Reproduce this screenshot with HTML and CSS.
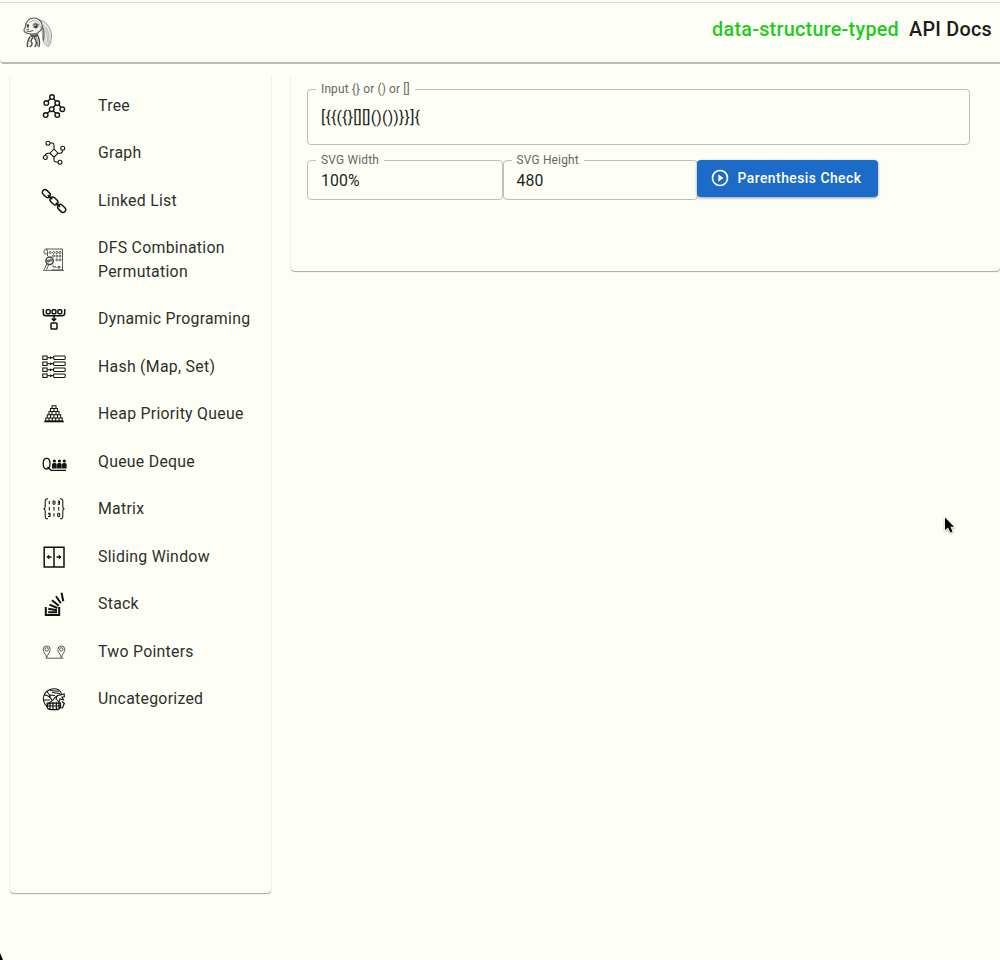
FILE: index.html
```html
<!DOCTYPE html>
<html lang="en">
<head>
<meta charset="utf-8">
<title>data-structure-typed</title>
<link rel="stylesheet" href="styles.css">
</head>
<body>
<header class="topbar">
  <svg class="logo" viewBox="0 0 30 34" fill="none" stroke="#555" stroke-linecap="round">
    <path d="M16 4C22 4 28 11 28.5 19Q28.5 27 25.5 30.5Q20 29 19.5 21Q20.5 14 16 7Z" fill="#e4e5de" stroke="#888" stroke-width=".8"/>
    <path d="M20 9Q26 18 24 27M23.5 12Q27.5 21 25.5 28" stroke="#b4b5ae" stroke-width=".9"/>
    <path d="M19 10Q22 16 20.5 24" stroke="#666" stroke-width="1.4"/>
    <path d="M2.5 10C3 5 6.5 1.8 11 2C16.5 2.2 20 7 19 12C17.5 16.5 12.5 18.5 8 18C3.5 17.5 0 16 1.2 13.5Q2.2 12 2.5 10Z" fill="#f4f5ee" stroke="#555" stroke-width="1.1"/>
    <path d="M6 6.5Q9 3.5 14 5Q17.5 7 17.5 12" stroke="#b4b5ae" stroke-width="1"/>
    <ellipse cx="12.8" cy="10" rx="2.2" ry="2.3" fill="#333" stroke="#888" stroke-width=".7"/>
    <path d="M10 8.3Q12.5 6 15.5 8.5" stroke="#555" stroke-width=".9"/>
    <ellipse cx="4.9" cy="9.8" rx="1.2" ry="1.9" fill="#444" stroke="none"/>
    <circle cx="12.2" cy="9.2" r=".7" fill="#fff" stroke="none"/>
    <path d="M3.8 15.2Q6.5 16.4 10 14.6M4 13.2L5.6 13.4" stroke-width="1"/>
    <path d="M7 18Q11 19.8 16 17L13.5 21Q10 22.5 7.5 20.5Z" fill="#555" stroke="none"/>
    <path d="M7 21Q4 25 4.5 30.5M9.5 22Q7 25 9 27Q9.5 29.5 7 30.5M14.5 19Q17.5 25 16 30.5M11.5 22Q15 27 12 30.5" stroke="#4a4a4a" stroke-width="1.4"/>
    <path d="M6 25Q8 24 8.5 26M13 21L15 25M14.5 26V30" stroke="#888"/>
  </svg>
  <nav class="links"><a class="brand">data-structure-typed</a><a class="docs">API Docs</a></nav>
</header>
<div class="layout">
  <aside class="sidebar">
    <ul class="menu">
      <li class="item"><svg class="icon" viewBox="0 0 24 24"><g stroke-width="1.35"><circle cx="10" cy="3" r="2.3"/><circle cx="4.3" cy="9" r="2.3"/><circle cx="15.3" cy="9" r="2.3"/><circle cx="9.7" cy="15.2" r="2.3"/><circle cx="20.3" cy="15.2" r="2.3"/><circle cx="3.7" cy="21" r="2.3"/><circle cx="15.3" cy="21" r="2.3"/><path d="M8.3 4.7L6 7.3M11.6 4.7L13.7 7.3M13.6 10.7L11.3 13.5M17 10.7L18.8 13.4M8 16.9L5.3 19.3M11.3 16.9L13.8 19.3"/></g></svg><span>Tree</span></li>
      <li class="item"><svg class="icon" viewBox="0 0 24 24"><path d="M12 8L16 12.2L12 16.2L8 12.2ZM8 2H10.5Q12 2.2 12 4V8M16 12.2H18.5Q20.5 12 20.6 9.2M8 12.2H6Q3.5 12.2 3.4 14.4M12 16.2V19Q12 21.2 16 21.2"/><circle cx="6" cy="2.3" r="2"/><circle cx="20.7" cy="7.2" r="2"/><circle cx="3.3" cy="16.5" r="2"/><circle cx="18" cy="21.2" r="2"/></svg><span>Graph</span></li>
      <li class="item"><svg class="icon" viewBox="0 0 24 24"><g stroke-width="1.4" transform="rotate(44 12 12)"><rect x="-3.2" y="9.3" width="9" height="5.4" rx="2.7"/><rect x="7.5" y="9.3" width="9" height="5.4" rx="2.7"/><rect x="18.2" y="9.3" width="9" height="5.4" rx="2.7"/><path d="M3.5 12H9.5M14.5 12H20.5" stroke-width="1.7"/></g></svg><span>Linked List</span></li>
      <li class="item"><svg class="icon" viewBox="0 0 24 24"><g stroke="#444" stroke-width=".9"><path d="M5 6H3Q2 6 2 3.5Q2 1 4 1H20.5V22H10M4 1Q5.5 1 5.5 3.5V8M1 22.3H22"/><circle cx="8.2" cy="4.5" r="1"/><circle cx="11.5" cy="4.5" r="1"/><circle cx="14.8" cy="4.5" r="1"/><circle cx="18" cy="4.5" r="1"/><circle cx="11.5" cy="8" r="1"/><circle cx="14.8" cy="8" r="1"/><circle cx="18" cy="8" r="1"/><circle cx="14.8" cy="11.8" r="1"/><circle cx="18" cy="11.8" r="1"/><circle cx="7.6" cy="12.8" r="3.7" stroke-width="1.5"/><circle cx="6.5" cy="13" r="1"/><circle cx="9" cy="12" r="1"/><path d="M5 15.7L2 21.5M7 16L4.5 21.5M10 18H12V20M16 18.5H18V20H16ZM13 18L14.5 20M4.4 13H9"/></g></svg><span>DFS Combination<br>Permutation</span></li>
      <li class="item"><svg class="icon" viewBox="0 0 24 24"><g stroke-width="1.5"><path d="M1.3 2V6Q1.3 8.8 4 8.8H20Q22.7 8.8 22.7 6V2M12 9V13M9.8 11.5L12 13.7L14.2 11.5"/><rect x="4.3" y="2.7" width="3.8" height="4" rx="1"/><rect x="10.1" y="2.7" width="3.8" height="4" rx="1"/><rect x="15.9" y="2.7" width="3.8" height="4" rx="1"/><rect x="9" y="16" width="6" height="6" rx=".8"/></g></svg><span>Dynamic Programing</span></li>
      <li class="item"><svg class="icon" viewBox="0 0 24 24"><g id="hash-row"><rect x=".8" y="1" width="4.3" height="3.4"/><rect x="11.6" y="1" width="11.6" height="3.4" rx=".8"/><path d="M5.2 2.7H11.5"/><path d="M8 1.2L10.2 2.7L8 4.2Z" fill="#111" stroke="none"/></g><use href="#hash-row" y="6"/><use href="#hash-row" y="12"/><use href="#hash-row" y="18"/></svg><span>Hash (Map, Set)</span></li>
      <li class="item"><svg class="icon" viewBox="0 0 24 24"><path d="M2.2 19.5H21.8" stroke-width="1.6"/><path d="M10 3.7H14V6.5H10ZM8.5 6.5H15.5V9.5H8.5ZM7 9.5H17V12.7H7ZM5.3 12.7H18.7V16H5.3ZM3.8 16H20.2V19H3.8ZM12 6.5V9.5M10 9.5V12.7M14 9.5V12.7M8.5 12.7V16M12 12.7V16M15.5 12.7V16M7 16V19M10.3 16V19M13.7 16V19M17 16V19"/></svg><span>Heap Priority Queue</span></li>
      <li class="item"><svg class="icon wide" viewBox="0 0 26 24"><path d="M4.7 8.4C7 8.4 8 10.3 8 13.6S7 19 4.7 19S1.2 17 1.2 13.6S2.4 8.4 4.7 8.4M5.5 17L9 20.3H24" stroke-width="1.3"/><g fill="#111" stroke="none"><circle cx="12.4" cy="11" r="1.6"/><circle cx="17.4" cy="11" r="1.6"/><circle cx="22.3" cy="11" r="1.6"/><path d="M10 18.5V14.4Q10 13 12.4 13T14.7 14.4V18.5ZM15.1 18.5V14.4Q15.1 13 17.4 13T19.7 14.4V18.5ZM20.1 18.5V14.4Q20.1 13 22.3 13T24.6 14.4V18.5Z"/></g></svg><span>Queue Deque</span></li>
      <li class="item"><svg class="icon" viewBox="0 0 24 24"><path d="M6 1.8Q3 1.5 3.2 4.5V9.5Q3.2 11.6 1.6 11.8Q3.2 12 3.2 14V19Q3 22.2 6 21.8M18 1.8Q21 1.5 20.8 4.5V9.5Q20.8 11.6 22.4 11.8Q20.8 12 20.8 14V19Q21 22.2 18 21.8M7.3 4V7.2M7.3 10V13.4M12 10V13.4M16.7 10V13.4M12 16.3V19.5M6 16.3H8V19.5H6M6.5 17.8H8M15.7 4H17.5V7.2H15.7M16 5.6H17.5"/><rect x="11" y="4" width="2" height="3.2" rx=".8"/><rect x="15.7" y="16.3" width="2" height="3.2" rx=".8"/></svg><span>Matrix</span></li>
      <li class="item"><svg class="icon" viewBox="0 0 24 24"><path d="M2.2 2.2H22V22H2.2ZM12 2.2V22" stroke-width="1.5"/><path d="M5.5 12H9.5M14.5 12H18.5" stroke-width="1.5"/><path d="M4.5 12L7.2 9.6V14.4ZM19.5 12L16.8 9.6V14.4Z" fill="#111" stroke="none"/></svg><span>Sliding Window</span></li>
      <li class="item"><svg class="icon" viewBox="0 0 24 24"><path d="M3.8 15V23H17.2V15M6.2 20.3H15M6.3 16.7L15 18.2M7.4 12.6L15.5 16M10 8.2L16.8 13.8M14 4.3L18.8 11.2M19.5 .7L21.3 9.2" stroke-width="2"/></svg><span>Stack</span></li>
      <li class="item"><svg class="icon" viewBox="0 0 24 24"><g stroke="#444" stroke-width=".9"><path d="M4.7 17.5C4 14.5 1.2 12.3 1.2 9.5A3.5 3.5 0 0 1 8.2 9.5C8.2 12.3 5.3 14.5 4.7 17.5ZM19.3 17.5C18.6 14.5 15.8 12.3 15.8 9.5A3.5 3.5 0 0 1 22.8 9.5C22.8 12.3 20 14.5 19.3 17.5ZM3.5 18.2H21.5"/><circle cx="4.7" cy="9.4" r="1.7"/><circle cx="19.3" cy="9.4" r="1.7"/></g></svg><span>Two Pointers</span></li>
      <li class="item"><svg class="icon" viewBox="0 0 24 24"><path d="M5 19.5Q1.4 16 1.3 11.2Q2 5 8 2.4Q13 .8 17 3Q20 6 19 8Q14 8 11 13L6 17ZM2 8Q7 8 10 13M5 4.5Q8 8 8.5 11M8 3.5L17 4.2M10 5.5L18 6.5M2 13H8M8 8L13 8.5M15.5 8.5L22.3 7V10H20L21.5 13L18 12L17 15L14 12Z"/><path d="M5.2 16.2H18.5V20Q17.5 22.7 14 22.7H9Q5.2 22.5 5.2 19.5ZM5.5 19H18M8 15.5V22M11 15V22.5M14.3 15V22.5M17 15V21.5M20 14.5L22.3 16.5L20.5 20.8L18.7 21" stroke-width="1.2"/></svg><span>Uncategorized</span></li>
    </ul>
  </aside>
  <main class="panel">
    <fieldset class="field expression"><legend>Input {} or () or []</legend><div class="value">[{{({}[][]()())}}]{</div></fieldset>
    <div class="controls">
      <fieldset class="field size"><legend>SVG Width</legend><div class="value">100%</div></fieldset>
      <fieldset class="field size"><legend>SVG Height</legend><div class="value">480</div></fieldset>
      <button class="check"><svg class="play" viewBox="0 0 24 24" fill="#fff"><path d="M10 16.5l6-4.5-6-4.5zM12 2a10 10 0 1 0 0 20 10 10 0 0 0 0-20zm0 18a8 8 0 1 1 0-16 8 8 0 0 1 0 16z"/></svg><span>Parenthesis Check</span></button>
    </div>
  </main>
</div>
<svg class="cursor" viewBox="0 0 14 20"><path d="M2 1.5V14L5 11.5L7.3 16.5L9.5 15.5L7.4 10.8H11Z" fill="#000" stroke="#fff" stroke-width="1.2" paint-order="stroke"/></svg>
<svg class="corner" viewBox="0 0 4 7"><path d="M0 0L3 7H0Z"/></svg>
</body>
</html>
```
FILE: styles.css
```css
* { box-sizing: border-box; }
body {
  margin: 0;
  height: 960px;
  overflow: hidden;
  background: #fdfff6;
  color: #2e2f2b;
  font: 15.84px/23.76px Roboto, sans-serif;
  letter-spacing: .28px;
}
.topbar {
  height: 62px;
  margin-top: 2px;
  padding: 13px 8px 0 23px;
  display: flex;
  justify-content: space-between;
  border-top: 1px solid #dcded2;
  border-bottom: 2px solid #b9bbb0;
  border-bottom-left-radius: 4px;
}
.logo { width: 30px; height: 34px; }
.links {
  display: flex;
  gap: 10px;
  padding-top: 1px;
  font-size: 19.8px;
  font-weight: 500;
  line-height: 26px;
  letter-spacing: .26px;
}
.brand { color: #24c824; }
.docs { color: #1c1d1a; }
.layout {
  display: flex;
  gap: 20px;
  align-items: flex-start;
  margin: 11px 0 0 10px;
}
.sidebar, .panel {
  border-radius: 0 0 4px 4px;
  box-shadow: 0 1px 1px rgba(40, 42, 35, .38), 0 0 1px rgba(40, 42, 35, .3);
  clip-path: inset(0 -2px -3px -2px);
}
.sidebar { width: 261px; height: 818px; }
.menu { list-style: none; margin: 0; padding: 6.9px 0 0; }
.item {
  display: flex;
  align-items: center;
  min-height: 47.52px;
  padding: 11.7px 0 11.7px 32px;
}
.icon {
  width: 24px;
  height: 24px;
  margin-right: 32px;
  flex: none;
  overflow: visible;
  fill: none;
  stroke: #111;
  stroke-width: 1.05;
}
.icon.wide { width: 26px; margin-right: 30px; }
.panel { width: 709px; height: 196px; padding: 8px 15px 0 16px; }
.field {
  min-width: 0;
  margin: 0;
  padding: 0 8px;
  border: 1px solid #bfc1b6;
  border-radius: 4px;
}
.field legend {
  height: 13px;
  padding: 0 5px;
  color: #666760;
  font-size: 11.9px;
  line-height: 13px;
  letter-spacing: .2px;
}
.value { padding-left: 5px; color: #1d1e1b; }
.expression { width: 663px; height: 62px; }
.expression legend { letter-spacing: .15px; }
.expression .value { padding-top: 10px; letter-spacing: .19px; }
.controls { display: flex; align-items: flex-start; margin-top: 9px; }
.size { width: 195.5px; height: 46px; }
.size .value { padding-top: 2px; letter-spacing: .1px; }
.check {
  width: 181px;
  height: 37px;
  margin: 6px 0 0 -1px;
  padding: 0 0 1px 13px;
  display: flex;
  align-items: center;
  gap: 7.5px;
  border: 0;
  border-radius: 4px;
  background: #1d6bc9;
  color: #fff;
  font: 500 13.86px/24px Roboto, sans-serif;
  letter-spacing: .48px;
  box-shadow: 0 1px 3px rgba(0, 0, 0, .4);
}
.play { width: 20px; height: 20px; flex: none; }
.cursor { position: absolute; left: 943px; top: 516px; width: 14px; height: 20px; filter: drop-shadow(0 1px 1px rgba(0, 0, 0, .3)); }
.corner { position: absolute; left: 0; top: 953px; width: 4px; height: 7px; }
```
